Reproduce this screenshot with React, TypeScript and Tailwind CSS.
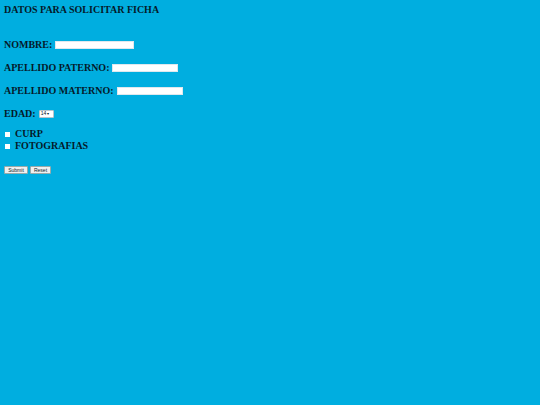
export default function App() {
  const input = "inline-block bg-white border border-[#dfe8ee] h-[8px] ml-[3px] align-middle";
  return (
    <div className="w-[540px] h-[405px] bg-[#00aee0] text-[#051a2a] font-bold text-[10px] leading-[12px] pl-[4px]" style={{ fontFamily: '"Liberation Serif", serif' }}>
      <div className="pt-[4px] h-[33px]">DATOS PARA SOLICITAR FICHA</div>
      <div className="flex flex-col">
        <div className="h-[23px] flex items-center"><span>NOMBRE:</span><span className={input + " w-[79px]"} /></div>
        <div className="h-[23px] flex items-center"><span>APELLIDO PATERNO:</span><span className={input + " w-[66px]"} /></div>
        <div className="h-[23px] flex items-center"><span>APELLIDO MATERNO:</span><span className={input + " w-[66px]"} /></div>
        <div className="h-[23px] flex items-center">
          <span>EDAD:</span>
          <span className="ml-[3px] inline-flex items-center bg-white border border-[#b8c4cc] rounded-[1px] h-[8px] w-[15px] text-[5px] font-normal leading-none px-[1px]" style={{ fontFamily: '"Liberation Sans", sans-serif' }}>14<span className="ml-[1px] text-[4px]">▾</span></span>
        </div>
      </div>
      <div className="mt-[3px] flex flex-col">
        <div className="h-[12px] flex items-center"><span className="w-[5px] h-[5px] bg-white mr-[5px] ml-[1px]" /><span>CURP</span></div>
        <div className="h-[12px] flex items-center"><span className="w-[5px] h-[5px] bg-white mr-[5px] ml-[1px]" /><span>FOTOGRAFIAS</span></div>
      </div>
      <div className="mt-[14px] flex gap-[2px]" style={{ fontFamily: '"Liberation Sans", sans-serif' }}>
        <span className="h-[8px] w-[24px] bg-[#f0f0f0] border border-[#9aa] rounded-[1px] text-[5px] font-normal leading-[6px] text-center">Submit</span>
        <span className="h-[8px] w-[21px] bg-[#f0f0f0] border border-[#9aa] rounded-[1px] text-[5px] font-normal leading-[6px] text-center">Reset</span>
      </div>
    </div>
  );
}
